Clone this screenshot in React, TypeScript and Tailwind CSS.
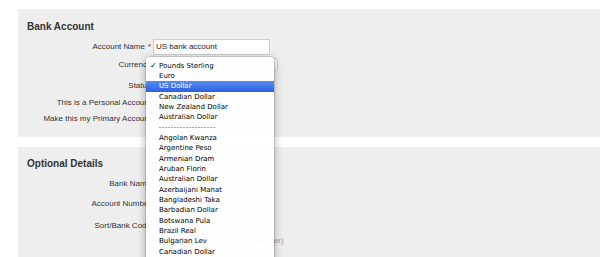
import React from "react";

const currencies = [
  "Pounds Sterling",
  "Euro",
  "US Dollar",
  "Canadian Dollar",
  "New Zealand Dollar",
  "Australian Dollar",
  "---",
  "Angolan Kwanza",
  "Argentine Peso",
  "Armenian Dram",
  "Aruban Florin",
  "Australian Dollar",
  "Azerbaijani Manat",
  "Bangladeshi Taka",
  "Barbadian Dollar",
  "Botswana Pula",
  "Brazil Real",
  "Bulgarian Lev",
  "Canadian Dollar",
];

function Row({
  label,
  required,
  className,
  children,
}: {
  label: string;
  required?: boolean;
  className?: string;
  children?: React.ReactNode;
}) {
  return (
    <div className={`flex h-[16px] items-center gap-[2px] ${className ?? ""}`}>
      <div className="w-[133px] shrink-0 whitespace-nowrap text-right text-[8px] text-[#333]">
        {label}
        {required && <span className="ml-[3px] text-[#d0021b]">*</span>}
      </div>
      {children}
    </div>
  );
}

export default function App() {
  return (
    <div
      className="relative h-[257px] w-[600px] overflow-hidden bg-white pt-[9px]"
      style={{ fontFamily: '"Liberation Sans", Arial, sans-serif' }}
    >
      <section className="ml-[18px] h-[128px] bg-[#eeeeee] pt-[12px]">
        <h2 className="pl-[9px] text-[10px] font-bold leading-[12px] text-[#333]">
          Bank Account
        </h2>
        <Row label="Account Name" required className="mt-[6px]">
          <div className="flex h-[16px] w-[117px] items-center border border-[#cfcfcf] bg-white pl-[2px] text-[8px] text-[#222]">
            US bank account
          </div>
        </Row>
        <Row label="Currency" className="mt-[2px]">
          <div className="h-[14px] w-[125px] rounded-[3px] border border-[#d6d6d6] bg-[#f7f7f7]" />
        </Row>
        <Row label="Status" className="mt-[5px]" />
        <Row label="This is a Personal Account" className="mt-[1px]" />
        <Row label="Make this my Primary Account" />
      </section>

      <section className="ml-[18px] mt-[10px] h-[120px] bg-[#eeeeee] pt-[11px]">
        <h2 className="pl-[9px] text-[10px] font-bold leading-[12px] text-[#333]">
          Optional Details
        </h2>
        <Row label="Bank Name" className="mt-[6px]" />
        <Row label="Account Number" className="mt-[4px]" />
        <Row label="Sort/Bank Code" className="mt-[6px]" />
        <div className="mt-[1px] pl-[134px] text-[8px] leading-[12px] text-[#9a9a9a]">
          (Sort Code, BSB or Routing Number)
        </div>
      </section>

      <div
        className="absolute left-[146px] top-[57px] h-[220px] w-[128px] rounded-[4px] bg-white/[0.94] pt-[3.8px] shadow-[0_2px_8px_rgba(0,0,0,0.35)] ring-1 ring-black/10"
        style={{ fontFamily: '"DejaVu Sans", "Lucida Grande", sans-serif' }}
      >
        {currencies.map((c, i) =>
          c === "---" ? (
            <div key={i} className="flex h-[10.33px] items-center pl-[13px]">
              <div className="h-[1px] w-[57px] bg-[repeating-linear-gradient(90deg,#a8a8a8_0_2px,transparent_2px_3px)]" />
            </div>
          ) : (
            <div
              key={i}
              className={`relative flex h-[10.33px] items-center pl-[13px] text-[7px] ${
                i === 2
                  ? "bg-gradient-to-b from-[#5a8cf2] to-[#2b5fe0] text-white"
                  : "text-black"
              }`}
            >
              {i === 0 && (
                <span className="absolute left-[4px] text-[8px] font-bold text-black">✓</span>
              )}
              {c}
            </div>
          )
        )}
      </div>
    </div>
  );
}
